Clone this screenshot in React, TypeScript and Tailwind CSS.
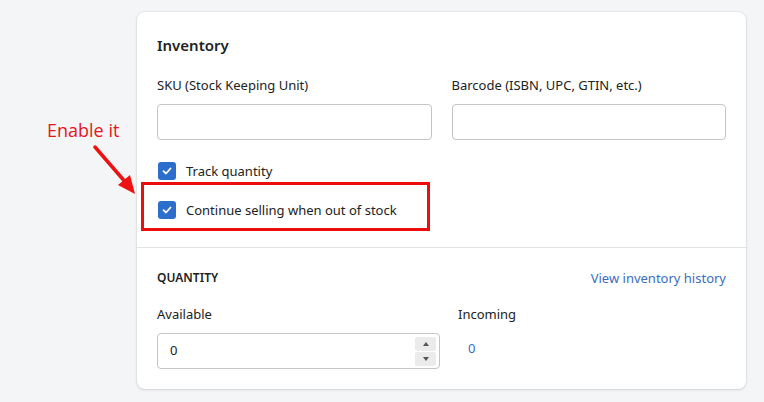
import React from "react";

const Check = () => (
  <span className="flex h-[18px] w-[18px] items-center justify-center rounded-[3px] bg-[#2c6ecb]">
    <svg width="12" height="12" viewBox="0 0 12 12" fill="none">
      <path d="M2.5 6.2 L5 8.5 L9.5 3.5" stroke="white" strokeWidth="1.8" strokeLinecap="round" strokeLinejoin="round" />
    </svg>
  </span>
);

export default function App() {
  return (
    <div
      className="relative h-[402px] w-[764px] overflow-hidden bg-[#f4f5f7] text-[#202223]"
      style={{ fontFamily: '"Noto Sans", "Segoe UI", sans-serif' }}
    >
      <div className="pl-[137px] pt-[12px]">
        <div className="w-[609px] rounded-[8px] bg-white shadow-[0_0_0_1px_rgba(63,63,68,0.05),0_1px_3px_0_rgba(63,63,68,0.15)]">
          <div className="px-[20px] pt-[22px] pb-[27px]">
            <h2 className="text-[15px] font-semibold leading-[22px]">Inventory</h2>
            <div className="mt-[19px] grid grid-cols-2 gap-[20px]">
              <div>
                <div className="text-[13px] leading-[20px]">SKU (Stock Keeping Unit)</div>
                <div className="mt-[9px] h-[36px] rounded-[4px] border border-[#c4c4c4]" />
              </div>
              <div>
                <div className="text-[13px] leading-[20px]">Barcode (ISBN, UPC, GTIN, etc.)</div>
                <div className="mt-[9px] h-[36px] rounded-[4px] border border-[#c4c4c4]" />
              </div>
            </div>
            <div className="mt-[21px] flex items-center gap-[10px] pl-[1px]">
              <Check />
              <span className="text-[13px] leading-[20px]">Track quantity</span>
            </div>
            <div className="mt-[19px] flex items-center gap-[10px] pl-[1px]">
              <Check />
              <span className="text-[13px] leading-[20px]">Continue selling when out of stock</span>
            </div>
          </div>
          <div className="border-t border-[#e1e3e5] px-[20px] pt-[20px] pb-[20px]">
            <div className="flex items-center justify-between">
              <span className="text-[12px] font-semibold uppercase leading-[20px]">Quantity</span>
              <span className="text-[13px] leading-[20px] text-[#3a6dbf]">View inventory history</span>
            </div>
            <div className="mt-[16px] flex">
              <div className="w-[283px]">
                <div className="text-[13px] leading-[20px]">Available</div>
                <div className="mt-[9px] flex h-[36px] items-center justify-between rounded-[4px] border border-[#c4c4c4] pl-[12px] pr-[3px]">
                  <span className="text-[13px]">0</span>
                  <div className="flex flex-col gap-[1px]">
                    <span className="flex h-[14px] w-[21px] items-center justify-center rounded-[2px] bg-[#ebebeb]">
                      <svg width="6" height="4" viewBox="0 0 6 4"><path d="M0 4 L3 0 L6 4Z" fill="#555" /></svg>
                    </span>
                    <span className="flex h-[14px] w-[21px] items-center justify-center rounded-[2px] bg-[#ebebeb]">
                      <svg width="6" height="4" viewBox="0 0 6 4"><path d="M0 0 L3 4 L6 0Z" fill="#555" /></svg>
                    </span>
                  </div>
                </div>
              </div>
              <div className="ml-[18px]">
                <div className="text-[13px] leading-[20px]">Incoming</div>
                <div className="mt-[14px] pl-[10px] text-[13px] leading-[20px] text-[#3a6dbf]">0</div>
              </div>
            </div>
          </div>
        </div>
      </div>

      {/* annotation */}
      <div
        className="absolute left-[47px] top-[117px] text-[18px] leading-[26px] text-[#e8141b]"
        style={{ fontFamily: '"Open Sans", sans-serif' }}
      >
        Enable it
      </div>
      <svg className="absolute left-0 top-0" width="764" height="402">
        <line x1="95" y1="147" x2="127" y2="184" stroke="#ee1111" strokeWidth="3.5" strokeLinecap="round" />
        <path d="M135 194 L118 185 L130 175 Z" fill="#ee1111" />
      </svg>
      <div className="absolute left-[141px] top-[182px] h-[49px] w-[289px] border-[3px] border-[#ee0d0d]" />
    </div>
  );
}
